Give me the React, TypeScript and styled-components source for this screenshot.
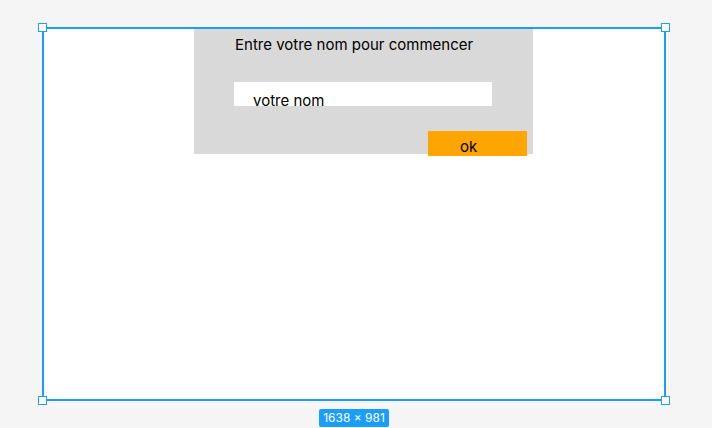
import * as React from 'react';
import styled, { createGlobalStyle } from 'styled-components';

const $blue = '#1b9dfa';

const GlobalStyle = createGlobalStyle`
    html, body {
        margin: 0;
        padding: 0;
        background: #f5f5f5;
        font-family: Inter, "Noto Sans", sans-serif;
    }
`;

export default function App() {
    return (
        <Canvas>
            <GlobalStyle />
            <Selection>
                <Frame>
                    <Panel>
                        <Title>Entre votre nom pour commencer</Title>
                        <NameField>votre nom</NameField>
                        <OkButton>ok</OkButton>
                    </Panel>
                    <Handle $corner="tl" />
                    <Handle $corner="tr" />
                    <Handle $corner="bl" />
                    <Handle $corner="br" />
                </Frame>
                <SizeTag>1638 × 981</SizeTag>
            </Selection>
        </Canvas>
    );
}

const Canvas = styled.div`
    width: 712px;
    height: 428px;
    padding: 27px 0 0 42px;
    box-sizing: border-box;
    overflow: hidden;
`;

const Selection = styled.div`
    width: 624px;
    display: flex;
    flex-direction: column;
    align-items: center;
`;

const Frame = styled.div`
    position: relative;
    width: 624px;
    height: 374px;
    box-sizing: border-box;
    border: 2px solid ${$blue};
    background: #ffffff;
`;

const Panel = styled.div`
    margin-left: 150px;
    width: 339px;
    height: 125px;
    padding-top: 7px;
    box-sizing: border-box;
    background: #d9d9d9;
    color: #000;
    font-size: 15px;
    line-height: 18px;
`;

const Title = styled.div`
    margin-left: 41px;
`;

const NameField = styled.div`
    margin: 28px 0 0 40px;
    width: 258px;
    height: 24px;
    padding: 10px 0 0 19px;
    box-sizing: border-box;
    background: #ffffff;
`;

const OkButton = styled.div`
    margin: 25px 0 0 234px;
    width: 99px;
    height: 25px;
    padding: 7px 0 0 32px;
    box-sizing: border-box;
    background: #ffa500;
`;

const Handle = styled.span<{ $corner: 'tl' | 'tr' | 'bl' | 'br' }>`
    position: absolute;
    width: 9px;
    height: 9px;
    box-sizing: border-box;
    border: 1px solid ${$blue};
    background: #ffffff;
    ${(p) => (p.$corner[0] === 't' ? 'top: -6px;' : 'bottom: -6px;')}
    ${(p) => (p.$corner[1] === 'l' ? 'left: -6px;' : 'right: -6px;')}
`;

const SizeTag = styled.div`
    margin-top: 8px;
    height: 18px;
    padding: 0 4px;
    border-radius: 2px;
    background: ${$blue};
    color: #ffffff;
    font-size: 12px;
    line-height: 18px;
`;
